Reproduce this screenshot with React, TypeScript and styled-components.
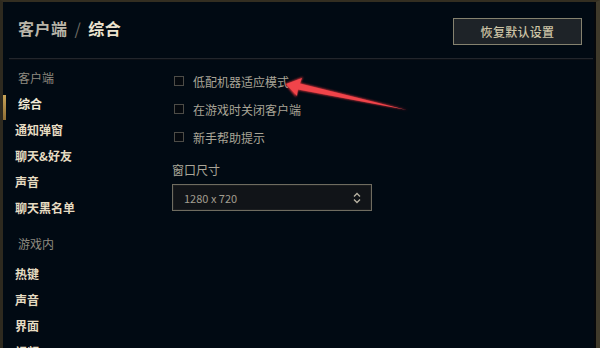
import React, { FC } from 'react';
import styled, { createGlobalStyle, css } from 'styled-components';

const GlobalStyle = createGlobalStyle`
  html, body {
    margin: 0;
    padding: 0;
    background: #010a13;
  }
  * {
    box-sizing: border-box;
  }
`;

const FONT = `"Noto Sans CJK SC", "Noto Sans", "Liberation Sans", sans-serif`;

const Frame = styled.div`
  position: relative;
  width: 600px;
  height: 348px;
  overflow: hidden;
  background: #010a13;
  font-family: ${FONT};
  border-left: 3px solid #2e2a1f;
  border-top: 2px solid #332e21;
  border-right: 4px solid #3f3a2b;
  box-shadow: inset -2px 0 0 #06080b;
`;

const Header = styled.header`
  height: 56px;
  display: flex;
  align-items: center;
  justify-content: space-between;
  padding: 0 14px 0 15px;
`;

const Title = styled.h1`
  margin: 0 0 4px;
  font-size: 16px;
  font-weight: 700;
  letter-spacing: 0.5px;
  color: #b9b5a9;
`;

const Slash = styled.span`
  color: #6f6d66;
  font-weight: 400;
  margin: 0 7px;
`;

const Current = styled.span`
  color: #ece3cf;
`;

const ResetButton = styled.button`
  width: 129px;
  height: 27px;
  margin-top: 3px;
  background: #1e2328;
  border: 1px solid #85826f;
  color: #cdc4a6;
  font-family: ${FONT};
  font-size: 12px;
  font-weight: 500;
  letter-spacing: 0.3px;
`;

const Divider = styled.div`
  height: 2px;
  margin: 0 0 0 6px;
  width: 584px;
  border-top: 1px solid #23262c;
  border-bottom: 1px solid #0b0f15;
`;

const Body = styled.div`
  display: flex;
`;

const Sidebar = styled.nav`
  width: 169px;
  padding-top: 5px;
  display: flex;
  flex-direction: column;
`;

const GroupLabel = styled.div<{ $top?: number; $bottom?: number }>`
  ${({ $top = 0, $bottom = 0 }) => css`
    height: 26px;
    line-height: 26px;
    margin-top: ${$top}px;
    margin-bottom: ${$bottom}px;
    padding-left: 15px;
    font-size: 12px;
    color: #8f8b80;
  `}
`;

const NavItem = styled.div<{ $active?: boolean }>`
  ${({ $active }) => css`
    position: relative;
    height: 26px;
    line-height: 26px;
    padding-left: ${$active ? 15 : 12}px;
    font-size: 12px;
    font-weight: 700;
    color: ${$active ? '#f0e8d6' : '#e6dcc2'};

    ${$active &&
    css`
      &::before {
        content: '';
        position: absolute;
        left: 0;
        top: 4px;
        width: 3px;
        height: 25px;
        background: linear-gradient(#c8a458, #8e6d34);
      }
    `}
  `}
`;

const Content = styled.main`
  padding-top: 7px;
  display: flex;
  flex-direction: column;
`;

const CheckRow = styled.label`
  height: 28px;
  display: flex;
  align-items: center;
  gap: 9px;
  padding-left: 2px;
  font-size: 12px;
  color: #a9a597;
`;

const Box = styled.span`
  width: 10px;
  height: 10px;
  border: 1px solid #4d4c47;
  background: #05090e;
`;

const FieldLabel = styled.div`
  margin-top: 11px;
  height: 16px;
  line-height: 16px;
  font-size: 12px;
  color: #aaa698;
`;

const Select = styled.div`
  margin-top: 6px;
  width: 200px;
  height: 27px;
  display: flex;
  align-items: center;
  justify-content: space-between;
  padding: 0 10px 0 11px;
  background: #111418;
  border: 1px solid #6f6c60;
  box-shadow: inset 0 0 0 1px #1b1d1f;
  font-family: ${FONT};
  font-size: 11px;
  color: #a29e90;
`;

const Arrow = styled.svg`
  position: absolute;
  left: 0;
  top: 0;
  pointer-events: none;
`;

const sideGroups = [
  { label: '客户端', items: ['综合', '通知弹窗', '聊天&好友', '声音', '聊天黑名单'] },
  { label: '游戏内', items: ['热键', '声音', '界面', '视频'] },
];

const checks = ['低配机器适应模式', '在游戏时关闭客户端', '新手帮助提示'];

const App: FC = () => (
  <>
    <GlobalStyle />
    <Frame>
      <Header>
        <Title>
          客户端<Slash>/</Slash>
          <Current>综合</Current>
        </Title>
        <ResetButton>恢复默认设置</ResetButton>
      </Header>
      <Divider />
      <Body>
        <Sidebar>
          {sideGroups.map((g, gi) => (
            <React.Fragment key={g.label}>
              <GroupLabel $top={gi ? 10 : 0} $bottom={gi ? 4 : 0}>
                {g.label}
              </GroupLabel>
              {g.items.map((item, i) => (
                <NavItem key={item + i} $active={gi === 0 && i === 0}>
                  {item}
                </NavItem>
              ))}
            </React.Fragment>
          ))}
        </Sidebar>
        <Content>
          {checks.map((c) => (
            <CheckRow key={c}>
              <Box />
              {c}
            </CheckRow>
          ))}
          <FieldLabel>窗口尺寸</FieldLabel>
          <Select>
            1280 x 720
            <svg width="8" height="12" viewBox="0 0 8 12">
              <path d="M1 4.5 L4 1.5 L7 4.5 M1 7.5 L4 10.5 L7 7.5" fill="none" stroke="#b8b3a3" strokeWidth="1.3" />
            </svg>
          </Select>
        </Content>
      </Body>
      <Arrow width="600" height="348" viewBox="0 0 600 348">
        <defs>
          <filter id="glow" x="-20%" y="-50%" width="140%" height="200%">
            <feGaussianBlur stdDeviation="0.8" />
          </filter>
        </defs>
        <polygon
          points="282,82 300,75 297,81 405,108 295,88 293,95"
          fill="#e5343a"
          filter="url(#glow)"
        />
        <polygon points="283,82 299,76 297,81.5 404,108 295,87.5 294,94" fill="#f0444a" />
      </Arrow>
    </Frame>
  </>
);

export default App;
